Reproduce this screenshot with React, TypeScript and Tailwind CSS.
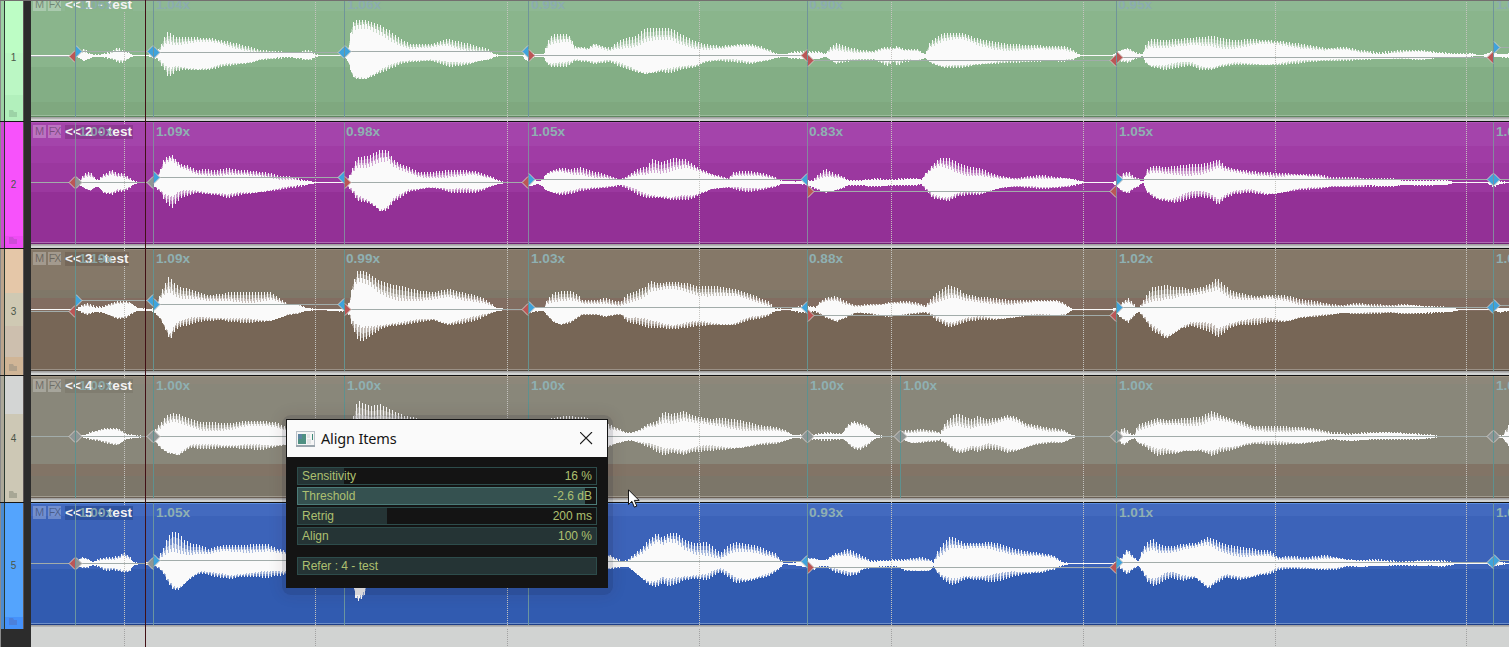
import React from "react";

type Seg = { x: number; y: number; tone: "b" | "r" | "g" };
type Track = {
  n: number;
  color: string;
  sub: string;
  bands: [number, string][];
  side: [number, string][];
  edge: string;
  base: string;
  mark: string;
  label: string;
  tag: string;
  rates: [number, string][];
  segs: Seg[];
  wave: string;
};

const X0 = 31;
const WIDTH = 1478;
const MID = 61;
const GRID = [124, 315, 507, 699, 891, 1083, 1275, 1466];
const TONES = { b: "#3fa3dc", r: "#bb5656", g: "#8f9594" };

const s = (x: number, y: number, tone: "b" | "r" | "g"): Seg => ({ x, y, tone });

const tracks: Track[] = [
  {
    n: 1,
    color: "#b9fcc3",
    sub: "#9cd3a6",
    bands: [[0, "#8eb893"], [15, "#8ab58c"], [71, "#83ae85"], [106, "#7fa87f"]],
    side: [[0, "#bdfdc5"], [58, "#bbf7c4"], [100, "#b2f0bc"]],
    edge: "#8fc093",
    base: "#5f8760",
    mark: "#6f949a",
    label: "#8bacaf",
    tag: "#8ab58b",
    rates: [[79, "1.06x"], [156, "1.04x"], [347, "1.06x"], [531, "0.99x"], [809, "0.90x"], [1118, "0.95x"], [1496, "1.06x"]],
    segs: [s(31, 62.5, "r"), s(75, 57.5, "b"), s(153, 58.5, "b"), s(344, 57.5, "b"), s(528, 61.5, "r"), s(807, 66.5, "r"), s(1116, 63.5, "r"), s(1493, 53.5, "b")],
    wave: "75,0,0 80,4,3 84,7,5 88,2,3 93,1,1 101,1,1 108,3,3 113,5,4 117,8,6 121,5,7 127,4,4 133,0,0 146,0,0 153,2,2 157,5,3 160,9,8 164,18,14 167,23,20 171,21,20 175,18,15 185,18,14 210,17,14 220,15,11 235,12,9 250,8,7 260,5,4 275,4,3 290,3,2 298,3,3 305,5,4 310,5,4 316,1,1 318,0,0 343,0,0 347,3,5 349,15,10 351,28,18 354,35,23 366,35,23 380,30,17 390,24,13 400,16,8 410,11,6 430,11,5 440,14,8 448,16,11 460,13,10 470,11,8 480,8,5 488,6,4 494,1,1 500,0,0 522,0,0 526,3,5 530,3,3 535,1,1 543,1,1 546,10,7 550,19,11 555,21,11 565,21,11 570,19,9 574,9,5 588,7,6 594,12,8 603,9,7 610,7,6 615,12,9 625,17,13 635,19,16 645,27,18 660,27,16 670,27,17 680,21,14 695,14,11 705,11,6 720,9,5 740,11,7 750,11,8 760,9,6 770,5,4 777,1,2 785,1,1 793,4,3 805,4,3 818,4,3 825,2,1 830,8,4 835,12,8 845,9,6 860,5,4 873,4,4 883,8,8 887,8,10 893,7,6 897,9,10 903,6,6 917,6,5 925,1,2 929,12,6 935,17,9 943,22,12 950,22,12 962,22,12 975,17,9 990,14,8 1010,11,7 1030,10,6 1050,9,5 1065,9,6 1075,4,3 1080,0,0 1112,0,0 1117,3,4 1122,6,6 1128,7,7 1133,4,4 1137,2,3 1142,1,0 1145,10,7 1150,16,11 1165,15,14 1190,17,10 1200,18,14 1212,19,14 1220,17,11 1235,15,9 1250,16,9 1265,15,9 1280,14,9 1295,12,8 1310,10,6 1325,7,5 1345,8,5 1360,5,4 1380,3,3 1400,5,3 1420,5,4 1440,3,2 1455,2,2 1470,2,1 1478,0,0 1486,1,1 1491,4,1 1497,1,1 1505,1,2 1509,2,2",
  },
  {
    n: 2,
    color: "#f752fb",
    sub: "#cf4bd8",
    bands: [[0, "#a444ab"], [23, "#a03ca5"], [40, "#9b389f"], [69, "#933096"]],
    side: [[0, "#f752fb"], [114, "#ee4bf4"]],
    edge: "#b254ba",
    base: "#6f2173",
    mark: "#86879f",
    label: "#8fb0b2",
    tag: "#8d3a92",
    rates: [[79, "1.00x"], [156, "1.09x"], [346, "0.98x"], [531, "1.05x"], [809, "0.83x"], [1119, "1.05x"], [1496, "1.00x"]],
    segs: [s(31, 61.5, "r"), s(75, 61.5, "g"), s(153, 56.5, "b"), s(344, 61.5, "r"), s(528, 58.5, "b"), s(807, 70.5, "r"), s(1116, 58.5, "b"), s(1493, 58.5, "b")],
    wave: "75,0,0 80,4,3 85,9,6 90,10,8 95,4,4 98,3,4 103,8,10 108,10,11 111,13,12 117,9,9 123,9,9 128,5,6 135,1,1 139,0,0 150,0,0 155,3,5 160,13,9 163,22,16 166,25,20 172,27,25 176,22,20 180,18,15 187,17,13 196,12,10 205,13,11 215,12,12 228,14,15 240,12,12 255,11,10 270,9,8 280,6,7 290,6,5 300,3,4 315,0,0 343,0,0 348,5,5 352,14,10 357,25,18 368,26,20 375,30,24 380,32,29 387,32,27 393,23,19 400,18,15 408,15,9 418,10,7 428,10,5 440,11,6 450,12,10 460,12,10 475,11,10 483,8,7 492,5,3 500,1,1 505,0,0 524,0,0 530,4,4 537,1,1 542,2,3 545,8,7 552,12,10 560,14,12 572,13,11 580,15,8 592,11,6 605,8,5 620,3,3 625,5,5 632,10,9 640,14,13 646,15,15 652,23,15 660,20,15 672,24,17 685,23,17 692,18,16 700,13,11 712,8,6 728,4,5 733,10,6 745,11,9 758,10,8 765,8,6 775,5,4 782,1,1 795,1,1 805,2,2 812,2,5 818,8,7 825,13,10 833,9,8 840,7,6 848,2,3 860,2,3 875,4,4 890,3,3 905,4,3 915,4,3 921,3,2 926,10,8 932,17,15 939,24,17 949,24,18 958,19,13 970,15,12 980,14,12 990,9,8 1000,6,5 1015,4,4 1030,6,5 1042,7,6 1055,5,5 1070,4,4 1080,1,1 1085,0,0 1112,0,0 1118,3,5 1122,9,9 1128,11,11 1133,6,6 1138,4,4 1141,1,1 1143,1,0 1146,12,9 1152,16,14 1158,16,17 1165,15,18 1175,16,20 1185,17,17 1192,18,15 1202,18,14 1210,20,16 1218,23,22 1225,16,15 1235,13,11 1250,11,10 1265,10,12 1280,9,10 1300,8,7 1318,8,6 1330,5,4 1350,5,4 1365,4,4 1390,4,4 1405,2,2 1420,2,3 1445,2,2 1454,0,0 1486,0,0 1493,3,5 1500,1,1 1509,0,0",
  },
  {
    n: 3,
    color: "#e0c3a5",
    sub: "#b0a08a",
    bands: [[0, "#857868"], [40, "#7f7768"], [48, "#826d61"], [61, "#776656"]],
    side: [[0, "#e5c7a8"], [44, "#cfc9b3"], [77, "#cdbfae"], [108, "#d0b596"]],
    edge: "#968a7b",
    base: "#4f463c",
    mark: "#659390",
    label: "#8fb0b2",
    tag: "#76685a",
    rates: [[79, "1.19x"], [156, "1.09x"], [346, "0.99x"], [531, "1.03x"], [809, "0.88x"], [1119, "1.02x"], [1496, "1.00x"]],
    segs: [s(31, 63.5, "r"), s(75, 52.5, "b"), s(153, 56.5, "b"), s(344, 61.5, "r"), s(528, 59.5, "b"), s(807, 67.5, "r"), s(1116, 59.5, "b"), s(1493, 57.5, "b")],
    wave: "76,0,0 81,4,3 86,6,5 95,3,2 102,3,3 110,6,6 118,8,9 126,8,8 131,6,4 138,1,1 150,0,1 155,3,4 160,16,9 165,26,20 168,32,27 170,31,30 175,25,20 180,22,17 190,20,15 198,17,12 207,14,11 220,15,10 230,17,12 247,17,13 270,17,11 280,10,8 288,5,5 298,5,4 307,1,1 318,0,0 344,0,2 349,8,6 352,25,18 357,38,29 362,38,32 368,36,28 380,28,19 390,25,16 405,22,15 420,18,12 433,17,10 448,20,15 460,17,14 475,14,11 483,11,7 490,6,4 497,1,1 510,0,0 524,0,0 528,4,4 535,1,2 543,2,1 547,10,6 553,16,12 560,18,15 570,18,13 578,14,8 582,9,5 595,9,5 605,11,7 615,8,5 621,8,5 627,15,12 635,18,14 645,22,17 650,28,18 658,26,18 672,27,19 685,26,18 697,23,16 715,23,15 735,20,15 750,15,10 760,11,9 768,8,6 775,1,1 788,0,0 800,4,3 808,4,3 815,2,2 820,8,5 827,12,9 836,13,12 845,8,8 855,4,3 870,5,4 880,5,6 890,7,7 905,8,5 915,7,4 925,4,3 930,10,5 935,15,10 942,20,14 948,24,17 955,22,16 965,15,12 980,12,10 995,11,10 1010,9,8 1030,9,6 1045,9,6 1058,9,6 1065,5,5 1072,0,0 1112,0,0 1118,3,6 1123,8,10 1128,11,13 1133,6,7 1138,1,2 1142,7,6 1147,16,14 1152,22,21 1166,24,29 1172,22,25 1180,22,19 1190,20,16 1203,22,20 1210,26,22 1217,31,28 1222,26,24 1230,19,18 1240,16,15 1255,13,15 1270,14,12 1285,14,12 1300,10,8 1315,8,7 1330,5,5 1342,4,3 1355,6,4 1370,5,4 1390,4,3 1404,5,4 1425,3,4 1440,3,3 1450,2,2 1460,0,0 1494,0,0 1498,1,3 1509,1,1",
  },
  {
    n: 4,
    color: "#cdc8b5",
    sub: "#a8a795",
    bands: [[0, "#8d877a"], [7, "#89877a"], [87, "#827466"], [99, "#7c7669"]],
    side: [[0, "#d3d5d4"], [38, "#cdc8b5"]],
    edge: "#a19684",
    base: "#6a5f54",
    mark: "#5e918f",
    label: "#8fb0b2",
    tag: "#807d70",
    rates: [[79, "1.00x"], [156, "1.00x"], [347, "1.00x"], [531, "1.00x"], [810, "1.00x"], [903, "1.00x"], [1119, "1.00x"], [1496, "1.00x"]],
    segs: [s(31, 61.5, "g"), s(75, 61.5, "g"), s(153, 61.5, "g"), s(344, 61.5, "g"), s(528, 61.5, "g"), s(807, 61.5, "g"), s(900, 61.5, "g"), s(1116, 61.5, "g"), s(1493, 61.5, "g")],
    wave: "75,0,0 83,1,1 90,4,3 98,6,4 105,8,6 113,8,8 118,8,8 125,3,3 133,1,1 150,0,0 155,7,5 160,13,11 167,21,16 172,23,17 178,22,19 190,17,11 200,14,12 230,13,11 245,15,12 262,15,13 275,14,10 285,9,8 292,12,8 320,0,0 349,0,0 352,15,5 355,30,20 358,35,20 363,33,20 372,30,20 380,32,20 387,28,18 395,24,16 405,20,12 417,18,10 430,14,9 480,5,5 528,0,0 545,12,8 551,18,10 566,20,10 580,19,9 589,18,9 595,13,9 608,12,10 615,9,7 625,4,4 632,4,4 640,7,7 648,13,10 655,14,14 663,24,18 672,22,16 684,25,18 693,20,15 710,17,14 720,18,13 740,16,11 755,12,9 760,11,8 775,9,7 785,6,4 793,1,1 805,2,2 812,2,3 825,4,4 838,3,3 842,3,2 847,11,6 853,15,12 860,13,13 867,11,9 872,4,4 877,1,1 885,0,0 895,0,0 903,6,3 910,6,6 920,7,6 930,6,5 940,4,4 945,14,7 952,20,13 957,23,16 963,20,16 972,17,13 978,20,15 987,17,12 997,18,13 1007,21,16 1016,19,14 1025,13,11 1035,11,8 1050,8,6 1062,7,6 1070,2,2 1077,0,0 1110,0,0 1117,3,3 1123,9,9 1129,4,4 1134,1,1 1137,11,6 1145,14,10 1152,16,16 1158,18,19 1165,16,17 1175,17,17 1185,18,14 1200,19,14 1207,23,17 1212,25,19 1220,21,15 1232,17,13 1243,14,9 1253,10,7 1275,10,8 1300,9,7 1318,7,5 1330,4,3 1350,3,4 1370,4,3 1390,4,3 1410,3,3 1430,2,2 1438,0,0 1486,0,0 1495,2,2 1502,1,1 1507,10,8 1509,12,9",
  },
  {
    n: 5,
    color: "#54a4fd",
    sub: "#4b80dc",
    bands: [[0, "#436abf"], [12, "#3c63b9"], [65, "#315bb0"]],
    side: [[0, "#54a4fd"], [114, "#4592fb"]],
    edge: "#5b8ee0",
    base: "#1f3f86",
    mark: "#6b95a0",
    label: "#8fb0b2",
    tag: "#2f539f",
    rates: [[79, "1.00x"], [156, "1.05x"], [347, "0.98x"], [531, "1.03x"], [809, "0.93x"], [1119, "1.01x"], [1496, "1.00x"]],
    segs: [s(31, 61.5, "r"), s(75, 61.5, "g"), s(153, 58.5, "b"), s(344, 58.5, "b"), s(528, 59.5, "b"), s(807, 65.5, "r"), s(1116, 60.5, "b"), s(1493, 58.5, "b")],
    wave: "76,1,1 81,6,4 87,5,4 92,1,2 98,4,3 105,6,7 113,6,6 120,8,8 123,11,9 129,7,8 133,1,2 140,0,0 153,2,2 158,6,4 163,15,10 167,26,18 173,32,26 178,30,26 184,23,20 192,19,13 200,18,9 208,14,11 216,17,13 230,18,15 240,18,13 255,19,13 267,19,14 275,15,12 285,12,11 320,0,0 348,0,0 352,10,14 355,30,34 358,30,37 363,30,34 367,25,22 370,20,15 400,10,10 500,0,0 545,5,5 608,9,6 615,5,4 623,2,3 628,4,3 635,10,9 642,16,15 650,25,22 657,30,23 662,25,19 668,30,23 676,30,20 685,23,16 695,20,15 707,21,16 713,16,12 720,10,8 727,17,13 735,21,19 745,19,18 757,17,15 767,13,13 775,10,8 780,4,4 783,0,0 800,1,2 807,5,4 813,5,6 820,3,3 827,4,3 833,9,8 840,11,10 848,14,12 856,10,11 862,7,6 870,3,4 885,3,4 895,4,3 905,4,7 920,6,7 930,4,7 933,1,2 936,11,8 943,20,16 950,27,21 956,24,20 965,20,15 980,20,16 990,21,18 1000,19,17 1012,15,13 1025,12,10 1040,10,9 1053,8,6 1062,1,2 1070,0,0 1112,0,0 1118,3,3 1122,7,7 1127,15,11 1132,8,6 1138,2,2 1142,14,8 1147,21,18 1153,24,22 1158,19,21 1165,17,16 1172,17,14 1182,19,17 1195,20,14 1208,26,25 1215,23,20 1225,19,14 1240,16,16 1250,15,14 1260,13,11 1268,13,11 1278,6,6 1290,7,5 1305,6,5 1325,8,6 1335,6,6 1345,4,3 1360,3,3 1375,4,2 1400,2,2 1430,3,2 1445,3,3 1452,1,1 1456,0,0 1486,0,0 1492,3,3 1500,1,1 1509,0,0",
  },
];

/* Splits an envelope into full-height peaks and the shorter columns between them. */
function columns(wave: string, seed: number) {
  const pts = wave.split(" ").map((p) => p.split(",").map(Number));
  let solid = "";
  let mid = "";
  let soft = "";
  let i = 0;
  const bar = (x: number, u: number, d: number) =>
    `M${x} ${MID - Math.round(u)}h1V${MID + 1 + Math.round(d)}h-1z`;
  for (let x = pts[0][0]; x < 1509; x++) {
    while (i < pts.length - 2 && pts[i + 1][0] <= x) i++;
    const [ax, au, ad] = pts[i];
    const [bx, bu, bd] = pts[i + 1];
    const t = Math.min(1, (x - ax) / (bx - ax));
    const up = au + (bu - au) * t;
    const dn = ad + (bd - ad) * t;
    const k = 0.56 + 0.22 * Math.sin(x / 17 + seed * 2) * Math.cos(x / 41 + seed);
    const kd = 0.72 + 0.22 * Math.sin(x / 13 + seed * 5) * Math.cos(x / 29);
    const phase = (x + seed) % 3;
    if (phase === 0) {
      solid += bar(x, up, dn);
    } else {
      const edge = phase === 1 ? 0.12 : 0;
      solid += bar(x, up * (k + edge), dn * (kd + edge / 2));
      if (up > 4) {
        mid += bar(x, up * (k + (1 - k) * 0.4), dn * (kd + (1 - kd) * 0.45));
        soft += bar(x, up * (k + (1 - k) * 0.72), dn * (kd + (1 - kd) * 0.75));
      }
    }
  }
  return { solid, mid, soft };
}

function Waveform({ t }: { t: Track }) {
  const { solid, mid, soft } = columns(t.wave, t.n);
  const end = t.n === 3 ? 128.5 : 132;
  return (
    <svg className="absolute inset-0 h-[127px] w-[1478px]" viewBox={`${X0} 0 ${WIDTH} 127`}>
      <g shapeRendering="crispEdges">
        {t.n !== 4 && t.n !== 5 && <path d={`M${X0} ${MID + 0.5}H1509`} stroke="#fafafa" />}
        {t.n === 5 && <path d={`M783 ${MID + 0.5}H1509`} stroke="#fafafa" />}
        <path d={soft} fill="#fafafa" opacity="0.3" />
        <path d={mid} fill="#fafafa" opacity="0.4" />
        <path d={solid} fill="#fafafa" />
        {GRID.map((x) => (
          <path key={x} d={`M${x + 0.5} 0V126`} stroke="#c4c3bf" strokeDasharray="1 1" />
        ))}
        {t.segs.map((g, i) => (
          <path key={g.x} d={`M${g.x} ${g.y}H${t.segs[i + 1]?.x ?? 1509}`} stroke="#a2acaa" />
        ))}
        {t.segs.slice(1).map((g) => (
          <path key={g.x} d={`M${g.x + 0.5} 1V123`} stroke={t.mark} />
        ))}
      </g>
      {t.segs.slice(1).map((g, i) => {
        const p = t.segs[i];
        const x = g.x + 0.5;
        return (
          <g key={g.x} stroke="#cfc9c4" strokeWidth="1">
            <path d={`M${x - 0.5} ${p.y - 6}L${x - 6.5} ${p.y}L${x - 0.5} ${p.y + 6}`} fill={TONES[p.tone]} />
            <path d={`M${x + 0.5} ${g.y - 6}L${x + 6.5} ${g.y}L${x + 0.5} ${g.y + 6}`} fill={TONES[g.tone]} />
          </g>
        );
      })}
      <g fontFamily="Liberation Sans, sans-serif" fontWeight="bold" fontSize="13.6">
        <rect x="65" y="4" width={t.n === 3 ? 64 : 68} height="14" fill={t.tag} />
        <g fill="#f4f2f2">
          <text x="65" y="15">&lt;&lt;</text>
          <text y="15">
            <tspan x="85">{t.n}</tspan>
            <tspan x="98">-</tspan>
            <tspan x={end} textAnchor="end">test</tspan>
          </text>
        </g>
        <g fill={t.label}>
          {t.rates.map(([x, v]) => (
            <text key={x} x={x} y="15" opacity={x === 79 ? 0.85 : 1}>{v}</text>
          ))}
        </g>
        <path d="M75.5 1V123" stroke={t.mark} shapeRendering="crispEdges" />
      </g>
    </svg>
  );
}

function Bands({ list }: { list: [number, string][] }) {
  return (
    <div className="flex h-full w-full flex-col">
      {list.map(([y, c], i) => (
        <div key={y} style={{ height: (list[i + 1]?.[0] ?? 127) - y, background: c }} className="w-full shrink-0" />
      ))}
    </div>
  );
}

function TrackLane({ t }: { t: Track }) {
  return (
    <section className="relative h-[127px] shrink-0 overflow-hidden">
      <div className="flex h-full flex-col bg-[#d1d3d2]">
        <div className="h-px shrink-0 bg-[#111]" />
        <div className="h-px shrink-0" style={{ background: t.edge }} />
        <div className="h-[119px] shrink-0 overflow-hidden">
          <Bands list={t.bands} />
        </div>
        <div className="h-px shrink-0" style={{ background: t.edge, opacity: 0.7, boxShadow: `inset 0 0 0 1px ${t.bands[t.bands.length - 1][1]}88` }} />
        <div className="h-px shrink-0" style={{ background: t.base }} />
        <div className="h-px shrink-0 bg-[#a3a3a3]" />
        <div className="h-px shrink-0 bg-[#b4b4b4]" />
      </div>
      <Waveform t={t} />
      <div className="absolute left-[2px] top-[4px] flex gap-[2px] font-['Liberation_Sans',sans-serif] text-[11px] leading-[13px] text-black/35">
        <span className="h-[13px] w-[13px] bg-white/25 text-center">M</span>
        <span className="h-[13px] w-[13px] bg-white/25 text-center text-[10.5px] tracking-[-1px]">FX</span>
      </div>
    </section>
  );
}

function SideCell({ t }: { t: Track }) {
  return (
    <div className="relative flex h-[127px] shrink-0 border-t border-black/50">
      <div className="w-px bg-[#8b8b8b]" />
      <div className="w-[3px] opacity-80" style={{ background: t.color }} />
      <div className="w-px bg-[#2b3a30]" />
      <div className="w-[18px] overflow-hidden">
        <Bands list={t.side} />
      </div>
      <div className="w-px bg-[#5c5656]" />
      <span className="absolute left-[5px] top-[57px] w-[17px] text-center font-['Liberation_Sans',sans-serif] text-[10px] leading-[11px] text-[#4b5648]">{t.n}</span>
      <svg className="absolute left-[9px] top-[115px] h-[7px] w-[8px]" viewBox="0 0 8 7">
        <path d="M0 0h4l1 2h3v5H0z" fill={t.sub} />
      </svg>
    </div>
  );
}

function Slider({ name, value, fill, hot }: { name: string; value?: string; fill: number; hot?: boolean }) {
  return (
    <div className={`relative h-[18px] border ${hot ? "border-[#4c7c79]" : "border-[#2d4c4b]"}`}>
      <div className={`h-full ${hot ? "bg-[#355150]" : "bg-[#253435]"}`} style={{ width: fill }} />
      <div className="absolute inset-0 flex justify-between pl-[4px] pr-[4px] leading-[16px]">
        <span>{name}</span>
        <span>{value}</span>
      </div>
    </div>
  );
}

function AlignDialog() {
  return (
    <div className="absolute left-[286px] top-[419px] w-[322px]">
      <div className="absolute -bottom-[7px] -left-[4px] -right-[5px] -top-[4px] rounded-[9px] bg-[#141020]/15 shadow-[0_0_14px_2px_rgba(60,30,20,0.08)]" />
      <div className="relative border border-[#141414] bg-[#141414]">
        <header className="flex h-[37px] items-center bg-[#fafafa] pl-[9px] pr-[14px]">
          <svg width="19" height="16" viewBox="0 0 19 16" shapeRendering="crispEdges">
            <path d="M.5.5h18v15H.5z" fill="#f5f5f5" stroke="#b9c1c8" />
            <path d="M0 14h19v2H0z" fill="#9aa5ad" />
            <path d="M2 3h8v10H2z" fill="#4f9082" />
            <path d="M2 3h4v5H2z" fill="#5a84a0" />
            <path d="M11 3h3v4h-3zM11 8h4v5h-4z" fill="#e2e4e5" />
            <path d="M16 3h1v6h-1z" fill="#3f8a78" />
          </svg>
          <span className="ml-[6px] grow font-['Noto_Sans',sans-serif] text-[14.5px] tracking-[-0.15px] text-[#151515]">Align Items</span>
          <svg width="13" height="13" viewBox="0 0 13 13">
            <path d="M0 0l12 12M12 0L0 12" stroke="#1a1a1a" strokeWidth="1.1" />
          </svg>
        </header>
        <div className="flex h-[130px] flex-col gap-[2px] px-[10px] pt-[10px] font-['Liberation_Sans',sans-serif] text-[12px] text-[#aec070]">
          <Slider name="Sensitivity" value="16 %" fill={46} />
          <Slider name="Threshold" value="-2.6 dB" fill={287} hot />
          <Slider name="Retrig" value="200 ms" fill={89} />
          <Slider name="Align" value="100 %" fill={298} />
          <div className="mt-[10px]">
            <Slider name="Refer : 4 - test" fill={298} />
          </div>
        </div>
      </div>
    </div>
  );
}

export default function App() {
  return (
    <main className="relative flex h-[647px] w-[1509px] overflow-hidden bg-[#d1d3d2]">
      <aside className="flex h-full w-[31px] shrink-0 overflow-hidden bg-[#2c2c2c]">
        <div className="-mt-[6px] flex w-[24px] flex-col">
          {tracks.map((t) => (
            <SideCell key={t.n} t={t} />
          ))}
          <div className="h-[24px] w-px bg-[#8b8b8b]" />
        </div>
      </aside>
      <div className="-mt-[6px] flex w-[1478px] shrink-0 flex-col">
        {tracks.map((t) => (
          <TrackLane key={t.n} t={t} />
        ))}
        <svg className="h-[24px] w-full shrink-0" viewBox={`${X0} 0 ${WIDTH} 24`} shapeRendering="crispEdges">
          {GRID.map((x) => (
            <path key={x} d={`M${x + 0.5} 0V24`} stroke="#a2a2a2" strokeDasharray="1 1" />
          ))}
        </svg>
      </div>
      <div className="absolute left-0 top-0 h-px w-full bg-[#736f6f]" />
      <div className="absolute left-[145px] top-0 h-full w-px bg-[#421016]" />
      <AlignDialog />
      <svg className="absolute left-[628px] top-[489px]" width="13" height="20" viewBox="0 0 13 20">
        <path d="M.5.8v14.7l3.4-3.2 2.4 5.8 2.5-1-2.4-5.7h4.7z" fill="#fff" stroke="#151515" />
      </svg>
    </main>
  );
}
